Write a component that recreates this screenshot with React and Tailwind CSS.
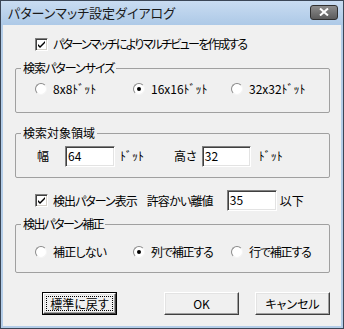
import React from 'react';

const font = { fontFamily: '"Noto Sans CJK JP", "Liberation Sans", sans-serif', fontFeatureSettings: '"palt"' };

const CheckBox = ({ checked }) => (
  <div className="w-[13px] h-[13px] shrink-0 bg-white border border-t-[#808080] border-l-[#808080] border-b-white border-r-white shadow-[inset_1px_1px_#404040,inset_-1px_-1px_#d4d0c8] flex items-center justify-center">
    {checked && (
      <svg width="9" height="9" viewBox="0 0 9 9">
        <path d="M1 4 L3 6 L8 1 L8 3 L3 8 L1 6 Z" fill="#000" />
      </svg>
    )}
  </div>
);

const Radio = ({ checked }) => (
  <div className="w-[12px] h-[12px] shrink-0 rounded-full bg-white border border-t-[#8a8a8a] border-l-[#8a8a8a] border-b-[#f4f4f4] border-r-[#f4f4f4] flex items-center justify-center">
    {checked && <div className="w-[4px] h-[4px] rounded-full bg-black" />}
  </div>
);

const RadioItem = ({ label, checked, tight = '' }) => (
  <div className="w-[98px] flex items-center gap-[6px]">
    <Radio checked={checked} />
    <span className={tight}>{label}</span>
  </div>
);

const TextBox = ({ value, w = 'w-[50px]' }) => (
  <div className={`${w} h-[21px] bg-white border border-t-[#808080] border-l-[#808080] border-b-white border-r-white shadow-[inset_1px_1px_#404040,inset_-1px_-1px_#e3e3e3] pl-[2px] pt-[1px] leading-[16px]`}>
    {value}
  </div>
);

const Group = ({ title, h, tight = '', children }) => (
  <fieldset className={`ml-[12px] w-[315px] ${h} border border-[#a0a0a0] rounded-[2px]`}>
    <legend className={`ml-[5px] px-[2px] leading-[14px] ${tight}`}>{title}</legend>
    {children}
  </fieldset>
);

const Button = ({ children, isDefault }) => (
  <div className={`w-[75px] h-[23px] ${isDefault ? 'border border-black' : ''}`}>
    <div className="w-full h-full bg-[#f0f0f0] border border-t-white border-l-white border-b-[#404040] border-r-[#404040] shadow-[inset_-1px_-1px_#a0a0a0,inset_1px_1px_#e3e3e3] flex items-center justify-center p-[2px]">
      <div className={`w-full h-full flex items-center justify-center ${isDefault ? 'border border-dotted border-black' : ''}`}>
        {children}
      </div>
    </div>
  </div>
);

export default function App() {
  return (
    <div className="w-[344px] h-[329px] bg-[#3b4656] p-[1px] text-[12px] text-black" style={font}>
      <div className="w-full h-full flex flex-col bg-[#b4cde8]">
        {/* title bar */}
        <div className="h-[24px] shrink-0 flex items-center justify-between pl-[7px] pr-[5px] bg-gradient-to-b from-[#c9dcf1] to-[#adc9e7]">
          <span className="text-[13px] text-[#1a1a1a]">パターンマッチ設定ダイアログ</span>
          <div className="w-[28px] h-[15px] mb-[2px] rounded-[3px] border border-[#303030] bg-gradient-to-b from-[#8d8d8d] to-[#5c5c5c] flex items-center justify-center">
            <svg width="10" height="8" viewBox="0 0 10 8">
              <path d="M1 0.5 L9 7.5 M9 0.5 L1 7.5" stroke="#fff" strokeWidth="2" />
            </svg>
          </div>
        </div>

        {/* client */}
        <div className="flex-1 mx-[2px] mb-[2px] bg-[#f0f0f0] flex flex-col">
          <div className="mt-[11px] h-[16px] pl-[32px] flex items-center gap-[5px]">
            <CheckBox checked />
            <span className="tracking-[-1.7px]">パターンマッチによりマルチビューを作成する</span>
          </div>

          <div className="mt-[9px]">
            <Group title="検索パターンサイズ" h="h-[52px]" tight="tracking-[-1px]">
              <div className="pt-[6px] pl-[19px] h-[16px] box-content flex items-center">
                <RadioItem label="8x8ﾄﾞｯﾄ" />
                <RadioItem label="16x16ﾄﾞｯﾄ" checked />
                <RadioItem label="32x32ﾄﾞｯﾄ" />
              </div>
            </Group>
          </div>

          <div className="mt-[13px]">
            <Group title="検索対象領域" h="h-[52px]">
              <div className="pt-[6px] pl-[21px] flex items-center">
                <span className="w-[12px] -mt-[2px]">幅</span>
                <div className="ml-[16px]"><TextBox value="64" /></div>
                <span className="ml-[5px] -mt-[2px]">ﾄﾞｯﾄ</span>
                <span className="ml-[30px] -mt-[2px]">高さ</span>
                <div className="ml-[5px]"><TextBox value="32" w="w-[49px]" /></div>
                <span className="ml-[8px] -mt-[2px]">ﾄﾞｯﾄ</span>
              </div>
            </Group>
          </div>

          <div className="mt-[12px] h-[21px] pl-[32px] flex items-center">
            <CheckBox checked />
            <span className="ml-[5px] tracking-[-1px]">検出パターン表示</span>
            <span className="ml-[10px] tracking-[-0.8px]">許容かい離値</span>
            <div className="ml-[14px]"><TextBox value="35" /></div>
            <span className="ml-[3px]">以下</span>
          </div>

          <div className="mt-[6px]">
            <Group title="検出パターン補正" h="h-[56px]" tight="tracking-[-1.4px]">
              <div className="pt-[13px] pl-[19px] h-[16px] box-content flex items-center">
                <RadioItem label="補正しない" tight="tracking-[-0.8px]" />
                <RadioItem label="列で補正する" checked tight="tracking-[-1.2px]" />
                <RadioItem label="行で補正する" tight="tracking-[-1.2px]" />
              </div>
            </Group>
          </div>

          <div className="mt-[19px] flex items-center">
            <div className="ml-[39px]"><Button isDefault>標準に戻す</Button></div>
            <div className="ml-[47px]"><Button>OK</Button></div>
            <div className="ml-[16px]"><Button>キャンセル</Button></div>
          </div>
        </div>
      </div>
    </div>
  );
}
